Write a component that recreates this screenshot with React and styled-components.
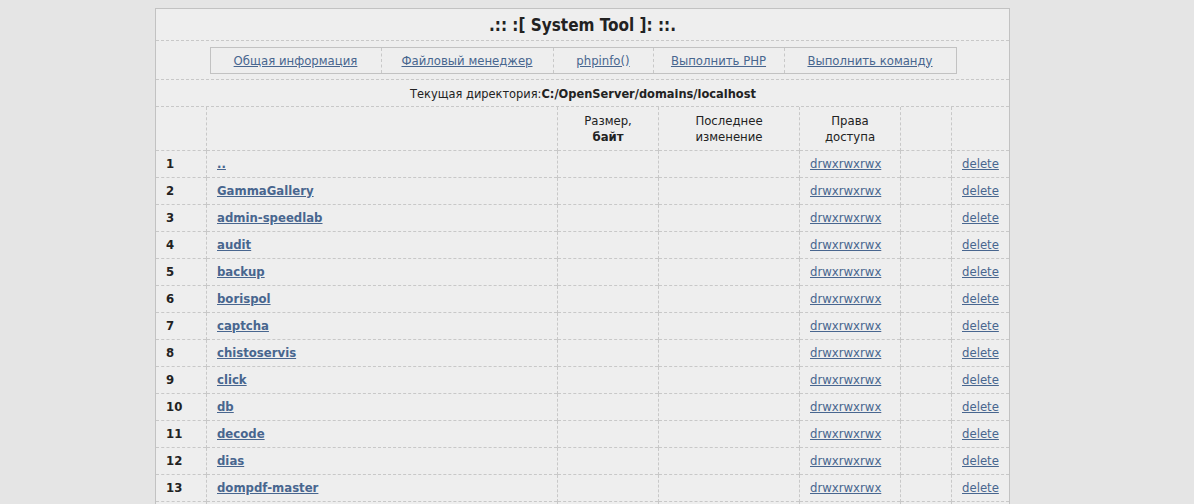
import styled, { createGlobalStyle } from 'styled-components';

const GlobalStyle = createGlobalStyle`
    body {
        margin: 0;
        background: #e5e5e5;
        font-family: "DejaVu Sans Condensed", Tahoma, "Liberation Sans", sans-serif;
        font-size: 13px;
        color: #222;
    }
`;

const Page = styled.div`
    padding: 8px 0 0 155px;
`;

const Panel = styled.div`
    width: 853px;
    border: 1px solid #c2c2c2;
    background: #eeeeee;
`;

const Title = styled.div`
    height: 31px;
    display: flex;
    align-items: center;
    justify-content: center;
    font-size: 17px;
    font-weight: bold;
    border-bottom: 1px dashed #c8c8c8;
`;

const MenuRow = styled.div`
    height: 38px;
    display: flex;
    align-items: center;
    justify-content: center;
    border-bottom: 1px dashed #c8c8c8;
    padding-left: 1px;
`;

const Menu = styled.div`
    display: flex;
    height: 25px;
    border: 1px solid #c2c2c2;
`;

const MenuItem = styled.div`
    width: ${(p) => p.$w}px;
    display: flex;
    align-items: center;
    justify-content: center;
    & + & {
        border-left: 1px dashed #c8c8c8;
    }
`;

const Link = styled.a`
    color: #48668f;
    text-decoration: underline;
    font-weight: ${(p) => (p.$bold ? 'bold' : 'normal')};
    cursor: pointer;
`;

const DirRow = styled.div`
    height: 26px;
    display: flex;
    align-items: center;
    justify-content: center;
    border-bottom: 1px dashed #c8c8c8;
    padding-left: 1px;
    font-size: 12.7px;
`;

const FileGrid = styled.div`
    display: grid;
    grid-template-columns: 50px 350px 100px 140px 100px 50px 57px;
    column-gap: 1px;
`;

const Cell = styled.div`
    height: ${(p) => (p.$head ? 43 : 26)}px;
    display: flex;
    flex-direction: column;
    justify-content: center;
    align-items: ${(p) => (p.$head ? 'center' : 'flex-start')};
    text-align: center;
    line-height: 16px;
    padding-left: ${(p) => (p.$head ? 0 : 10)}px;
    font-weight: ${(p) => (p.$bold ? 'bold' : 'normal')};
    border-bottom: 1px dashed #c8c8c8;
    position: relative;
    &:not(:nth-child(7n))::after {
        content: '';
        position: absolute;
        top: 0;
        bottom: -1px;
        right: -1px;
        border-right: 1px dashed #c8c8c8;
    }
`;

const files = [
    '..',
    'GammaGallery',
    'admin-speedlab',
    'audit',
    'backup',
    'borispol',
    'captcha',
    'chistoservis',
    'click',
    'db',
    'decode',
    'dias',
    'dompdf-master',
    'elfinder',
];

const menu = [
    { label: 'Общая информация', w: 170 },
    { label: 'Файловый менеджер', w: 171 },
    { label: 'phpinfo()', w: 99 },
    { label: 'Выполнить PHP', w: 130 },
    { label: 'Выполнить команду', w: 171 },
];

export default function App() {
    return (
        <Page>
            <GlobalStyle />
            <Panel>
                <Title>.:: :[ System Tool ]: ::.</Title>
                <MenuRow>
                    <Menu>
                        {menu.map((m) => (
                            <MenuItem key={m.label} $w={m.w}>
                                <Link>{m.label}</Link>
                            </MenuItem>
                        ))}
                    </Menu>
                </MenuRow>
                <DirRow>
                    Текущая директория:<b>C:/OpenServer/domains/localhost</b>
                </DirRow>
                <FileGrid>
                    <Cell $head />
                    <Cell $head />
                    <Cell $head>
                        <span>Размер,</span>
                        <b>байт</b>
                    </Cell>
                    <Cell $head>
                        <span>Последнее</span>
                        <span>изменение</span>
                    </Cell>
                    <Cell $head>
                        <span>Права</span>
                        <span>доступа</span>
                    </Cell>
                    <Cell $head />
                    <Cell $head />
                    {files.map((name, i) => [
                        <Cell key={`n${i}`} $bold>{i + 1}</Cell>,
                        <Cell key={`f${i}`}>
                            <Link $bold>{name}</Link>
                        </Cell>,
                        <Cell key={`s${i}`} />,
                        <Cell key={`m${i}`} />,
                        <Cell key={`p${i}`}>
                            <Link>drwxrwxrwx</Link>
                        </Cell>,
                        <Cell key={`e${i}`} />,
                        <Cell key={`d${i}`}>
                            <Link>delete</Link>
                        </Cell>,
                    ])}
                </FileGrid>
            </Panel>
        </Page>
    );
}
